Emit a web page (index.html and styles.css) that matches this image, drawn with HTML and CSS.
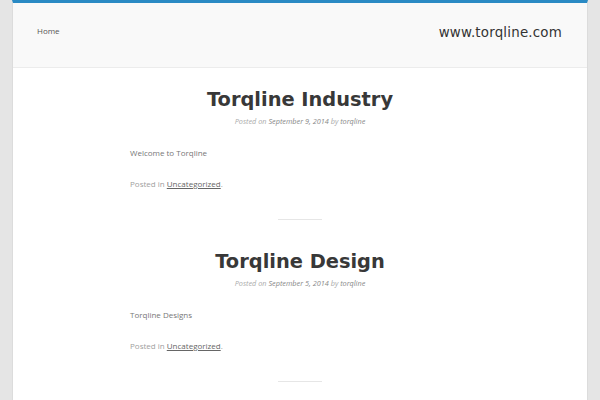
FILE: index.html
```html
<!DOCTYPE html>
<html>
<head>
<meta charset="utf-8">
<link rel="stylesheet" href="styles.css">
</head>
<body>
<div class="page">
  <header class="masthead">
    <nav class="nav"><a href="#">Home</a></nav>
    <div class="site-title">www.torqline.com</div>
  </header>
  <main class="content">
    <article class="post">
      <h1 class="post-title">Torqline Industry</h1>
      <div class="meta">Posted on <span class="d">September 9, 2014</span> by <span class="d">torqline</span></div>
      <p class="body">Welcome to Torqline</p>
      <p class="foot">Posted in <a href="#">Uncategorized</a>.</p>
    </article>
    <hr class="sep">
    <article class="post">
      <h1 class="post-title">Torqline Design</h1>
      <div class="meta">Posted on <span class="d">September 5, 2014</span> by <span class="d">torqline</span></div>
      <p class="body">Torqline Designs</p>
      <p class="foot">Posted in <a href="#">Uncategorized</a>.</p>
    </article>
    <hr class="sep">
  </main>
</div>
</body>
</html>
```
FILE: styles.css
```css
html, body { margin: 0; padding: 0; }
body {
  background: #e5e5e5;
  font-family: "Open Sans", "DejaVu Sans", sans-serif;
  color: #666;
  height: 400px;
  overflow: hidden;
}
.page {
  margin: 0 12px;
  background: #fff;
  border-top: 3px solid #2a8ac4;
  border-left: 1px solid #dcdcdc;
  border-right: 1px solid #dcdcdc;
  min-height: 397px;
}
.masthead {
  background: #f9f9f9;
  border-bottom: 1px solid #ececec;
  height: 65px;
  display: flex;
  align-items: center;
  justify-content: space-between;
  padding: 0 25px 0 24px;
  box-sizing: border-box;
}
.nav a {
  font-size: 8px;
  color: #555;
  text-decoration: none;
  position: relative;
  top: -7px;
}
.site-title {
  font-family: "DejaVu Sans", sans-serif;
  font-size: 13.4px;
  color: #333;
  letter-spacing: 0.2px;
  position: relative;
  top: -3px;
}
.content {
  padding: 19px 117px 0;
}
.post-title {
  font-family: "DejaVu Sans", sans-serif;
  font-weight: bold;
  font-size: 19.4px;
  color: #383838;
  text-align: center;
  margin: 0;
  line-height: 26px;
}
.meta {
  text-align: center;
  font-size: 7.3px;
  line-height: 10px;
  font-style: italic;
  color: #aaa;
  margin-top: 3px;
}
.meta .d { color: #888; }
.body {
  font-size: 8px;
  line-height: 11px;
  color: #777;
  margin: 21px 0 0;
}
.foot {
  font-size: 8px;
  line-height: 11px;
  color: #a0a0a0;
  margin: 20px 0 0;
}
.foot a { color: #666; text-decoration: underline; }
.sep {
  width: 44px;
  margin: 30px auto 29px;
  border: 0;
  border-top: 1px solid #e6e6e6;
}
```
